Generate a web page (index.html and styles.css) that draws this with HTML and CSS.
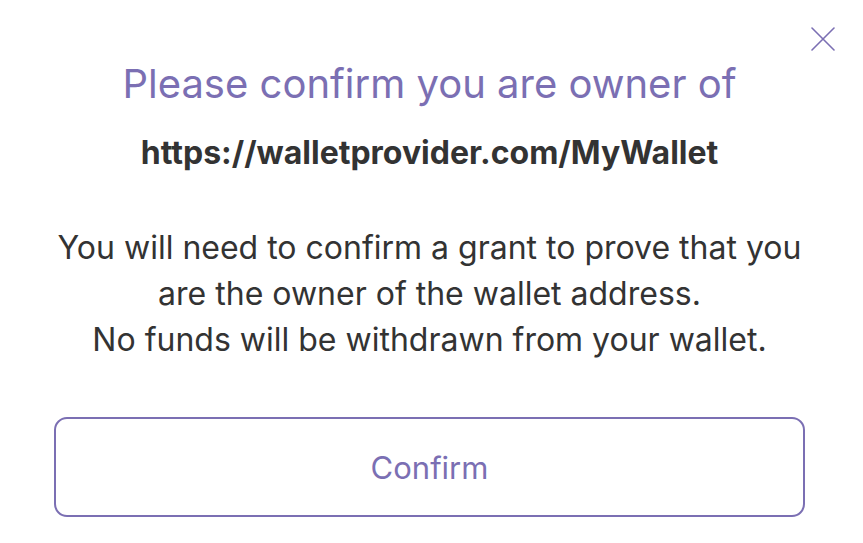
FILE: index.html
```html
<!DOCTYPE html>
<html>
<head>
<meta charset="UTF-8">
<title>Confirm wallet owner</title>
<link rel="stylesheet" href="styles.css">
</head>
<body>
<div class="dialog">
	<button class="close" aria-label="Close">
		<svg width="24" height="24" viewBox="0 0 24 24"><path d="M1 1 L23 23 M23 1 L1 23" stroke="#7b6fb3" stroke-width="1.6" fill="none" stroke-linecap="round"/></svg>
	</button>
	<h2 class="title">Please confirm you are owner of</h2>
	<p class="wallet">https://walletprovider.com/MyWallet</p>
	<p class="info">You will need to confirm a grant to prove that you<br>are the owner of the wallet address.<br>No funds will be withdrawn from your wallet.</p>
	<button class="btn">Confirm</button>
</div>
</body>
</html>
```

FILE: styles.css
```css
body{
	margin: 0;
	font-family: Inter, "Noto Sans", sans-serif;
	background: #fff;
}
.dialog{
	position: relative;
	display: flex;
	flex-direction: column;
	align-items: center;
	padding: 60px 58px 0 54px;
}
.close{
	position: absolute;
	top: 27px;
	right: 28px;
	background: none;
	border: none;
	padding: 0;
	width: 24px;
	height: 24px;
	cursor: pointer;
}
.title{
	margin: 0;
	font-size: 40px;
	font-weight: 400;
	color: #7b6fb3;
	line-height: 48px;
}
.wallet{
	margin: 25px 0 0;
	font-size: 32px;
	font-weight: 700;
	color: #333;
	line-height: 40px;
}
.info{
	margin: 52px 0 0;
	font-size: 32px;
	color: #333;
	line-height: 46px;
	text-align: center;
}
.btn{
	margin-top: 54px;
	width: 100%;
	height: 100px;
	border: 2px solid #7b6fb3;
	border-radius: 13px;
	background: #fff;
	color: #7b6fb3;
	font-family: inherit;
	font-size: 31px;
}
```
